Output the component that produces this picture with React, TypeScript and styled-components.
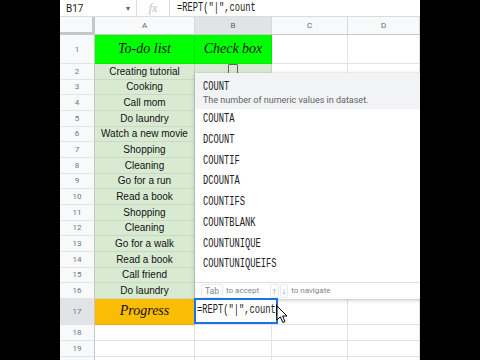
import React from "react"
import styled, { createGlobalStyle } from "styled-components"

const GlobalStyle = createGlobalStyle`
  html, body {
    margin: 0;
    padding: 0;
    background: #000;
  }
  body {
    font-family: Roboto, "Liberation Sans", Arial, sans-serif;
  }
`

const ROW_H = 235 / 15

const tasks = [
  "Creating tutorial",
  "Cooking",
  "Call mom",
  "Do laundry",
  "Watch a new movie",
  "Shopping",
  "Cleaning",
  "Go for a run",
  "Read a book",
  "Shopping",
  "Cleaning",
  "Go for a walk",
  "Read a book",
  "Call friend",
  "Do laundry",
]

const suggestions = [
  "COUNTA",
  "DCOUNT",
  "COUNTIF",
  "DCOUNTA",
  "COUNTIFS",
  "COUNTBLANK",
  "COUNTUNIQUE",
  "COUNTUNIQUEIFS",
]

const FORMULA = '=REPT("|",count'

type Fill = "none" | "green" | "light" | "orange"

const fills: Record<Fill, string> = {
  none: "#fff",
  green: "#00ff00",
  light: "#d9ead3",
  orange: "#fbbc04",
}

export default function App() {
  return (
    <>
      <GlobalStyle />
      <S.Page>
        <S.Sheet>
          <S.FormulaBar>
            <S.NameBox>
              B17
              <S.Caret>▾</S.Caret>
            </S.NameBox>
            <S.FxBox>fx</S.FxBox>
            <S.FormulaText>
              <S.Mono>{FORMULA}</S.Mono>
            </S.FormulaText>
          </S.FormulaBar>

          <S.Grid>
            <S.Corner />
            <S.ColHead>A</S.ColHead>
            <S.ColHead active>B</S.ColHead>
            <S.ColHead>C</S.ColHead>
            <S.ColHead>D</S.ColHead>

            <S.RowHead>1</S.RowHead>
            <S.Cell fill="green"><S.Script>To-do list</S.Script></S.Cell>
            <S.Cell fill="green"><S.Script>Check box</S.Script></S.Cell>
            <S.Cell fill="none" />
            <S.Cell fill="none" />

            {tasks.map((t, i) => (
              <React.Fragment key={i}>
                <S.RowHead>{i + 2}</S.RowHead>
                <S.Cell fill="light">{t}</S.Cell>
                <S.Cell fill="light">{i === 0 && <S.CheckBox />}</S.Cell>
                <S.Cell fill="none" />
                <S.Cell fill="none" />
              </React.Fragment>
            ))}

            <S.RowHead active>17</S.RowHead>
            <S.Cell fill="orange"><S.Script>Progress</S.Script></S.Cell>
            <S.Cell fill="none">
              <S.Editor>
                <S.Mono>{FORMULA}</S.Mono>
                <S.TextCursor />
                <S.Pointer width="12" height="19" viewBox="0 0 12 19">
                  <path
                    d="M1 1 L1 15 L4.3 11.8 L6.8 17.5 L9 16.5 L6.6 11 L11 11 Z"
                    fill="#fff"
                    stroke="#000"
                    strokeWidth="1"
                    strokeLinejoin="round"
                  />
                </S.Pointer>
              </S.Editor>
            </S.Cell>
            <S.Cell fill="none" />
            <S.Cell fill="none" />

            {["18", "19", ""].map((n, i) => (
              <React.Fragment key={i}>
                <S.RowHead>{n}</S.RowHead>
                <S.Cell fill="none" />
                <S.Cell fill="none" />
                <S.Cell fill="none" />
                <S.Cell fill="none" />
              </React.Fragment>
            ))}
          </S.Grid>

          <S.Popup>
            <S.PopupHead>
              <S.Mono>COUNT</S.Mono>
              <S.Desc>The number of numeric values in dataset.</S.Desc>
            </S.PopupHead>
            <S.List>
              {suggestions.map((s) => (
                <S.Item key={s}>
                  <S.Mono>{s}</S.Mono>
                </S.Item>
              ))}
            </S.List>
            <S.Footer>
              <S.Key>Tab</S.Key>
              <span>to accept</span>
              <S.Arrows>
                <S.Key small>↑</S.Key>
                <S.Key small>↓</S.Key>
              </S.Arrows>
              <span>to navigate</span>
            </S.Footer>
          </S.Popup>
        </S.Sheet>
      </S.Page>
    </>
  )
}

const S = {
  Page: styled.div`
    width: 480px;
    height: 360px;
    background: #000;
    display: flex;
    justify-content: center;
    overflow: hidden;
  `,
  Sheet: styled.div`
    position: relative;
    width: 360px;
    height: 360px;
    background: #fff;
    overflow: hidden;
    display: flex;
    flex-direction: column;
  `,
  FormulaBar: styled.div`
    display: flex;
    align-items: center;
    height: 17px;
    flex-shrink: 0;
    border-bottom: 1px solid #dadce0;
    box-sizing: border-box;
    color: #202124;
  `,
  NameBox: styled.div`
    width: 77px;
    height: 100%;
    display: flex;
    align-items: center;
    justify-content: space-between;
    padding: 0 6px;
    box-sizing: border-box;
    border-right: 1px solid #dadce0;
    font-size: 10px;
  `,
  Caret: styled.span`
    font-size: 8px;
    color: #5f6368;
  `,
  FxBox: styled.div`
    width: 33px;
    height: 100%;
    display: flex;
    align-items: center;
    justify-content: center;
    border-right: 1px solid #dadce0;
    box-sizing: border-box;
    font-family: "Liberation Serif", serif;
    font-style: italic;
    font-size: 12px;
    color: #bdc1c6;
  `,
  FormulaText: styled.div`
    padding-left: 7px;
    font-size: 11px;
  `,
  Mono: styled.span`
    display: inline-block;
    font-family: "Liberation Mono", "DejaVu Sans Mono", monospace;
    font-size: 12.5px;
    color: #202124;
    transform: scaleX(0.7);
    transform-origin: left center;
    white-space: pre;
  `,
  Grid: styled.div`
    display: grid;
    grid-template-columns: 35px 100px 77px 76px 72px;
    grid-template-rows: 18px 29px repeat(15, ${ROW_H}px) 26px 16px 16px 16px;
  `,
  Corner: styled.div`
    background: #f8f9fa;
    border-right: 3px solid #c4c7c5;
    border-bottom: 3px solid #c4c7c5;
  `,
  ColHead: styled.div<{ active?: boolean }>`
    display: flex;
    align-items: center;
    justify-content: center;
    background: ${(p) => (p.active ? "#e1e3e6" : "#f8f9fa")};
    border-right: 1px solid #d7d9dc;
    border-bottom: 1px solid #c4c7c5;
    font-size: 8px;
    color: #5f6368;
  `,
  RowHead: styled.div<{ active?: boolean }>`
    display: flex;
    align-items: center;
    justify-content: center;
    background: ${(p) => (p.active ? "#e1e3e6" : "#f8f9fa")};
    border-right: 1px solid #c4c7c5;
    border-bottom: 1px solid #e2e3e3;
    font-size: 8px;
    color: #70757a;
  `,
  Cell: styled.div<{ fill: Fill }>`
    position: relative;
    display: flex;
    align-items: center;
    justify-content: center;
    overflow: visible;
    background: ${(p) => fills[p.fill]};
    border-right: 1px solid ${(p) => (p.fill === "none" ? "#e2e3e3" : "rgba(0,0,0,0.09)")};
    border-bottom: 1px solid ${(p) => (p.fill === "none" ? "#e2e3e3" : "rgba(0,0,0,0.07)")};
    font-family: "Liberation Sans", Arial, sans-serif;
    font-size: 10px;
    color: #111;
    white-space: nowrap;
  `,
  Script: styled.span`
    font-family: "Liberation Serif", "DejaVu Serif", serif;
    font-style: italic;
    font-size: 14px;
    color: #111;
  `,
  CheckBox: styled.div`
    width: 8px;
    height: 8px;
    border: 1px solid #5f6368;
    border-radius: 1px;
    margin-top: -4px;
  `,
  Editor: styled.div`
    position: absolute;
    left: -1px;
    top: -1px;
    width: 84px;
    height: 26px;
    box-sizing: border-box;
    border: 2px solid #1a73e8;
    background: #fff;
    z-index: 3;
    display: flex;
    align-items: center;
    padding-left: 1px;
    padding-bottom: 1px;
  `,
  TextCursor: styled.div`
    position: absolute;
    left: 80px;
    top: 4px;
    width: 1px;
    height: 12px;
    background: #202124;
  `,
  Pointer: styled.svg`
    position: absolute;
    left: 80px;
    top: 5px;
  `,
  Popup: styled.div`
    position: absolute;
    left: 135px;
    top: 73px;
    width: 240px;
    height: 226px;
    background: #fff;
    box-shadow: 0 1px 4px rgba(60, 64, 67, 0.3), 0 0 1px rgba(60, 64, 67, 0.2);
    display: flex;
    flex-direction: column;
    z-index: 2;
  `,
  PopupHead: styled.div`
    background: #f1f3f4;
    height: 37px;
    padding: 7px 8px 0;
    box-sizing: border-box;
    display: flex;
    flex-direction: column;
    gap: 1px;
  `,
  Desc: styled.div`
    font-size: 9px;
    color: #5f6368;
    white-space: nowrap;
  `,
  List: styled.div`
    display: flex;
    flex-direction: column;
    padding-bottom: 7px;
  `,
  Item: styled.div`
    height: 20.7px;
    display: flex;
    align-items: center;
    padding-left: 8px;
  `,
  Footer: styled.div`
    height: 17px;
    border-top: 1px solid #e0e0e0;
    display: flex;
    align-items: center;
    gap: 3px;
    padding-left: 6px;
    font-size: 8px;
    color: #80868b;
    white-space: nowrap;
  `,
  Key: styled.span<{ small?: boolean }>`
    display: inline-flex;
    align-items: center;
    justify-content: center;
    height: 12px;
    padding: 0 ${(p) => (p.small ? "1px" : "3px")};
    border: 1px solid #e8eaed;
    border-radius: 2px;
    font-size: ${(p) => (p.small ? "9px" : "8.5px")};
    color: #80868b;
  `,
  Arrows: styled.span`
    display: inline-flex;
    gap: 1px;
    margin-left: 8px;
  `,
}
